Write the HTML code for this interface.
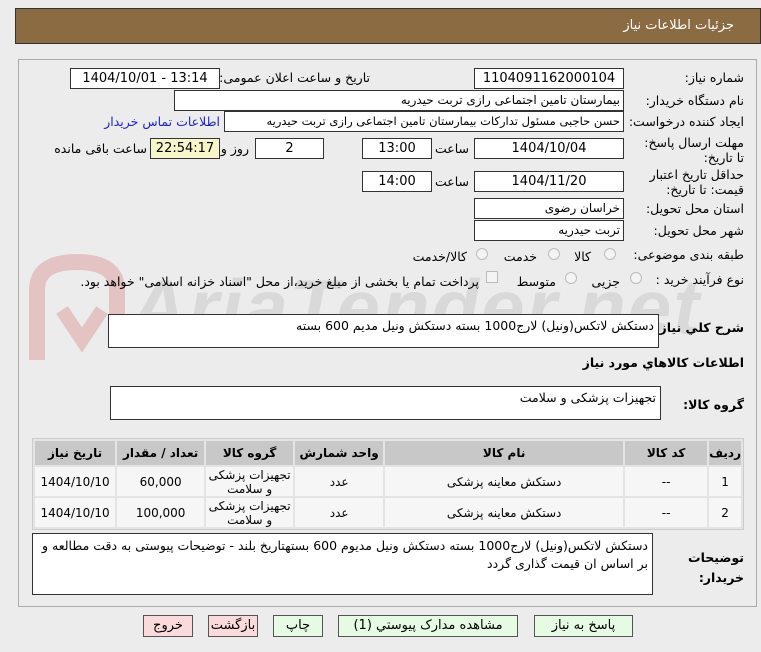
<!DOCTYPE html>
<html><head><meta charset="utf-8"><style>
*{box-sizing:border-box;margin:0;padding:0}
body{width:761px;height:652px;background:#ececec;font-family:"DejaVu Sans","Liberation Sans",sans-serif;font-size:12px;color:#000;position:relative;overflow:hidden}
.a{position:absolute;white-space:nowrap}
.hd{left:15px;top:8px;width:746px;height:36px;background:#8b6c42;border:1px solid #333}
.hd span{position:absolute;right:26px;top:9px;color:#fff;font-size:13px}
.pn{left:18px;top:59px;width:739px;height:548px;border:1px solid #aaa;background:#ececec}
.in{position:absolute;background:#fff;border:1px solid #333;height:21px;line-height:19px;text-align:center;font-size:13px;overflow:hidden}
.r{text-align:right;padding-right:3px;direction:rtl;font-size:12px}
.lb{position:absolute;direction:rtl;text-align:right;font-size:12.5px}
.rad{position:absolute;width:12px;height:12px;border-radius:50%;border:1px solid #bbb;background:#f4f4f4}
.ta{position:absolute;background:#fff;border:1px solid #333;direction:rtl;text-align:right;padding:3px 4px;font-size:12.5px}
table{position:absolute;left:32px;top:438px;width:712px;border-collapse:separate;border-spacing:2px;background:#e4e4e4;border:1px solid #ccc}
th{background:#c8c8c8;height:24px;font-size:12px;font-weight:bold}
td{background:#f6f6f6;height:29px;text-align:center;font-size:12px;line-height:14px}
.bt{position:absolute;top:615px;height:22px;border:1px solid #555;background:#e6fbe4;text-align:center;line-height:20px;font-size:13px}
.pk{background:#fadada}
.wm{left:130px;top:262px;font-size:78px;font-weight:bold;font-style:italic;color:rgba(150,150,150,.22);font-family:"Liberation Sans",sans-serif;letter-spacing:2px}
</style></head><body>
<div class="a hd"><span>جزئیات اطلاعات نیاز</span></div>
<div class="a pn"></div>
<div class="a wm">AriaTender.net</div>
<svg class="a" style="left:22px;top:250px" width="110" height="130"><path d="M15 110 L15 40 Q15 12 55 12 Q95 12 95 40 L95 70" stroke="rgba(215,120,120,.35)" stroke-width="16" fill="none"/><path d="M40 60 L60 90 L80 60" stroke="rgba(215,120,120,.35)" stroke-width="14" fill="none"/></svg>

<div class="lb" style="right:17px;top:70px">شماره نیاز:</div>
<div class="in" style="left:474px;top:68px;width:150px">1104091162000104</div>
<div class="lb" style="right:391px;top:70px">تاریخ و ساعت اعلان عمومی:</div>
<div class="in" style="left:70px;top:68px;width:150px">1404/10/01 - 13:14</div>

<div class="lb" style="right:17px;top:93px">نام دستگاه خریدار:</div>
<div class="in r" style="left:174px;top:90px;width:450px">بیمارستان تامین اجتماعی رازی تربت حیدریه</div>

<div class="lb" style="right:17px;top:114px">ایجاد کننده درخواست:</div>
<div class="in r" style="left:224px;top:111px;width:400px;font-size:11.5px">حسن حاجبی مسئول تدارکات بیمارستان تامین اجتماعی رازی تربت حیدریه</div>
<div class="lb" style="right:541px;top:114px;color:#2222cc">اطلاعات تماس خریدار</div>

<div class="lb" style="right:17px;top:135px;line-height:15px;white-space:normal;width:110px">مهلت ارسال پاسخ: تا تاریخ:</div>
<div class="in" style="left:474px;top:138px;width:150px">1404/10/04</div>
<div class="lb" style="right:292px;top:141px">ساعت</div>
<div class="in" style="left:362px;top:138px;width:70px">13:00</div>
<div class="in" style="left:255px;top:138px;width:69px">2</div>
<div class="lb" style="right:512px;top:141px">روز و</div>
<div class="in" style="left:150px;top:138px;width:70px;background:#f6f6c8">22:54:17</div>
<div class="lb" style="right:614px;top:141px">ساعت باقی مانده</div>

<div class="lb" style="right:17px;top:167px;line-height:15px;white-space:normal;width:100px">حداقل تاریخ اعتبار قیمت: تا تاریخ:</div>
<div class="in" style="left:474px;top:171px;width:150px">1404/11/20</div>
<div class="lb" style="right:292px;top:174px">ساعت</div>
<div class="in" style="left:362px;top:171px;width:70px">14:00</div>

<div class="lb" style="right:17px;top:201px">استان محل تحویل:</div>
<div class="in r" style="left:474px;top:198px;width:150px">خراسان رضوی</div>
<div class="lb" style="right:17px;top:223px">شهر محل تحویل:</div>
<div class="in r" style="left:474px;top:220px;width:150px">تربت حیدریه</div>

<div class="lb" style="right:17px;top:247px">طبقه بندی موضوعی:</div>
<div class="rad" style="left:604px;top:248px"></div><div class="lb" style="right:170px;top:249px">کالا</div>
<div class="rad" style="left:548px;top:248px"></div><div class="lb" style="right:224px;top:249px">خدمت</div>
<div class="rad" style="left:476px;top:248px"></div><div class="lb" style="right:294px;top:249px">کالا/خدمت</div>

<div class="lb" style="right:17px;top:272px">نوع فرآیند خرید :</div>
<div class="rad" style="left:630px;top:272px"></div><div class="lb" style="right:141px;top:274px">جزیی</div>
<div class="rad" style="left:565px;top:272px"></div><div class="lb" style="right:205px;top:274px">متوسط</div>
<div class="a" style="left:486px;top:271px;width:12px;height:12px;border:1px solid #bbb;background:#f4f4f4"></div>
<div class="lb" style="right:282px;top:274px">پرداخت تمام یا بخشی از مبلغ خرید،از محل "اسناد خزانه اسلامی" خواهد بود.</div>

<div class="lb" style="right:17px;top:320px;font-weight:bold">شرح كلي نياز:</div>
<div class="ta" style="left:108px;top:314px;width:551px;height:34px">دستکش لاتکس(ونیل) لارج1000 بسته دستکش ونیل مدیم 600 بسته</div>
<div class="lb" style="right:17px;top:355px;font-weight:bold">اطلاعات کالاهاي مورد نياز</div>
<div class="lb" style="right:17px;top:397px;font-weight:bold">گروه کالا:</div>
<div class="ta" style="left:110px;top:386px;width:551px;height:34px">تجهیزات پزشکی و سلامت</div>

<table dir="rtl">
<tr><th style="width:28px">رديف</th><th style="width:82px">کد کالا</th><th style="width:238px">نام کالا</th><th style="width:88px">واحد شمارش</th><th style="width:87px">گروه کالا</th><th style="width:87px">تعداد / مقدار</th><th>تاریخ نیاز</th></tr>
<tr><td>1</td><td>--</td><td>دستکش معاینه پزشکی</td><td>عدد</td><td>تجهیزات پزشکی و سلامت</td><td>60,000</td><td>1404/10/10</td></tr>
<tr><td>2</td><td>--</td><td>دستکش معاینه پزشکی</td><td>عدد</td><td>تجهیزات پزشکی و سلامت</td><td>100,000</td><td>1404/10/10</td></tr>
</table>

<div class="lb" style="right:17px;top:548px;font-weight:bold;line-height:20px;white-space:normal;width:60px">توضیحات خریدار:</div>
<div class="ta" style="left:32px;top:533px;width:621px;height:62px;line-height:18px;white-space:normal">دستکش لاتکس(ونیل) لارج1000 بسته دستکش ونیل مدیوم 600 بستهتاریخ بلند - توضیحات پیوستی به دقت مطالعه و بر اساس ان قیمت گذاری گردد</div>

<div class="bt" style="left:534px;width:99px">پاسخ به نیاز</div>
<div class="bt" style="left:338px;width:180px">مشاهده مدارک پیوستي (1)</div>
<div class="bt" style="left:273px;width:50px">چاپ</div>
<div class="bt pk" style="left:208px;width:50px">بازگشت</div>
<div class="bt pk" style="left:143px;width:50px">خروج</div>
</body></html>
